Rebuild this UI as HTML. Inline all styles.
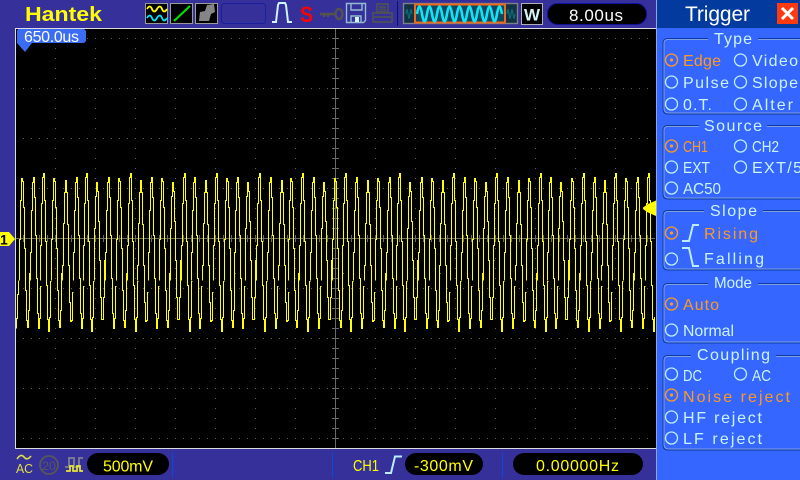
<!DOCTYPE html>
<html><head><meta charset="utf-8"><style>
html,body{margin:0;padding:0;background:#36309a;width:800px;height:480px;overflow:hidden}
svg{display:block;font-family:"Liberation Sans",sans-serif}
.c{shape-rendering:crispEdges}
.t{font-size:16px;fill:#ccf4ff}
.o{font-size:16px;fill:#ff9a1e}
.r{fill:none;stroke:#bdeeff;stroke-width:1.3}
.ro{fill:none;stroke:#ff9a1e;stroke-width:1.3}
.y{font-size:16px;fill:#ffff00}
</style></head><body>
<svg width="800" height="480" viewBox="0 0 800 480" xmlns="http://www.w3.org/2000/svg">
<defs>
<pattern id="rows" x="15" y="38" width="8" height="50" patternUnits="userSpaceOnUse"><rect class="c" x="0" y="0" width="1" height="1" fill="#5e5e5e"/></pattern>
<pattern id="cols" x="15" y="38" width="40" height="10" patternUnits="userSpaceOnUse"><rect class="c" x="0" y="0" width="1" height="1" fill="#5e5e5e"/></pattern>
<clipPath id="frame"><rect x="16" y="29" width="639" height="419"/></clipPath>
<path id="a" d="M0 28V0H1V-42H2V-70H3V-75H4V-55H5V-17H6V26H7V61H8V76H9V66H10V34H11"/>
<path id="b" d="M0 28V-13H1V-52H2V-74H3V-71H4V-45H5V-4H6V38H7V68H8V75H9V58H10V21H11"/>
<path id="d" d="M0 28V13H1V-29H2V-60H3V-72H4V-60H5V-28H6V13H7V50H8V69H9V68H10V40H11"/>
<path id="e" d="M0 28V-7H1V-49H2V-75H3V-79H4V-52H5V-11H6V33H7V67H8V79H9V65H10V29H11"/>
<path id="f" d="M0 28V-24H1V-56H2V-70H3V-61H4V-31H5V8H6V45H7V67H8V67H9V45H10V8H11"/>
</defs>
<rect width="800" height="480" fill="#36309a"/>
<!-- scope -->
<rect x="15" y="28" width="641" height="421" fill="#000"/>
<rect x="15" y="38" width="640" height="401" fill="url(#rows)"/>
<rect x="16" y="38" width="639" height="401" fill="url(#cols)"/>
<path class="c" d="M16 238.500H655M335.500 29V448" stroke="#6a6a6a" fill="none"/>
<path class="c" d="M15 238.500H655" stroke="#6a6a6a" stroke-width="7" stroke-dasharray="1 7" fill="none"/>
<path class="c" d="M335.500 38V439" stroke="#6a6a6a" stroke-width="7" stroke-dasharray="1 9" fill="none"/>
<path class="c" d="M15.500 28V449M15 28.500H656M15 448.500H656" stroke="#dcdcdc" fill="none"/>
<g clip-path="url(#frame)"><g class="c" transform="translate(0.5,252.5)" fill="none" stroke="#ffff00" stroke-width="1">
<path d="M16 76V66H17V42H18V28"/>
<use href="#b" x="19"/><use href="#a" x="30"/><use href="#e" x="40"/><use href="#b" x="51"/><use href="#d" x="62"/><use href="#a" x="73"/><use href="#e" x="83"/><use href="#f" x="94"/><use href="#a" x="105"/><use href="#b" x="116"/>
<use href="#e" x="127"/><use href="#d" x="137"/><use href="#a" x="148"/><use href="#b" x="159"/><use href="#f" x="170"/><use href="#e" x="181"/><use href="#a" x="191"/><use href="#d" x="202"/><use href="#e" x="213"/><use href="#b" x="224"/>
<use href="#a" x="234"/><use href="#f" x="245"/><use href="#e" x="256"/><use href="#a" x="267"/><use href="#d" x="278"/><use href="#b" x="288"/><use href="#e" x="299"/><use href="#a" x="310"/><use href="#f" x="321"/><use href="#b" x="332"/>
<use href="#e" x="342"/><use href="#a" x="353"/><use href="#d" x="364"/><use href="#b" x="375"/><use href="#a" x="386"/><use href="#e" x="396"/><use href="#f" x="407"/><use href="#a" x="418"/><use href="#b" x="429"/><use href="#d" x="439"/>
<use href="#e" x="450"/><use href="#a" x="461"/><use href="#b" x="472"/><use href="#f" x="483"/><use href="#e" x="493"/><use href="#a" x="504"/><use href="#d" x="515"/><use href="#b" x="526"/><use href="#e" x="537"/><use href="#a" x="547"/>
<use href="#f" x="558"/><use href="#b" x="569"/><use href="#e" x="580"/><use href="#a" x="591"/><use href="#d" x="601"/><use href="#e" x="612"/><use href="#b" x="623"/><use href="#a" x="634"/><use href="#e" x="645"/>
</g></g>
<!-- top bar -->
<text x="25" y="21" font-size="20" font-weight="700" fill="#ffff00" textLength="77" lengthAdjust="spacingAndGlyphs">Hantek</text>
<g class="c" fill="#000" stroke="#9a9a9a"><rect x="145.500" y="3.500" width="22" height="20"/><rect x="170.500" y="3.500" width="22" height="20"/><rect x="195.500" y="3.500" width="22" height="20"/></g>
<path d="M147 9q3-5 5 0t5 0 5 0 5 0" fill="none" stroke="#ffff00" stroke-width="1.800"/>
<path d="M147 18q3-5 5 0t5 0 5 0 5 0" fill="none" stroke="#00e6ff" stroke-width="1.800"/>
<path d="M174 21L190 6" stroke="#00e000" stroke-width="2.200"/>
<path d="M199 21l1-9 5-1 2-6 7-1 1 8-4 2-2 7z" fill="#858585"/>
<rect x="221.500" y="3.500" width="44" height="20" rx="3" fill="none" stroke="#1a1f9c" stroke-width="1"/>
<path d="M272 22h4l2-17 1-2h6l1 2 2 17h4" fill="none" stroke="#cdf4ff" stroke-width="2"/>
<text x="300" y="22" font-size="22" font-weight="700" fill="#ff0000" textLength="13" lengthAdjust="spacingAndGlyphs">S</text>
<path d="M320 14h15M324 14v3M328 14v3" stroke="#55534f" stroke-width="2.400" fill="none"/>
<ellipse cx="339" cy="14" rx="3.500" ry="5" fill="none" stroke="#55534f" stroke-width="2.400"/>
<path d="M346.500 3.500h19v17l-2 2h-17zM351 4v6h11V4M351 23v-7h10v7" fill="none" stroke="#93bcd0" stroke-width="1.400"/>
<rect x="355" y="17" width="4" height="5" fill="#cdf4ff"/>
<path d="M377 4h11v8h-11zM373 13h19v9h-19zM379 7h7M379 9.500h7M374 17h17" fill="none" stroke="#4e5058" stroke-width="1.700"/>
<path class="c" d="M397.500 1V26" stroke="#0a0f70"/>
<rect x="403.500" y="3.500" width="114" height="20" fill="#123246" stroke="#7f7f86" stroke-width="1.400"/>
<path d="M406 14q1-9 2 0t2 0 2 0M507 14q1-9 2 0t2 0 2 0 2 0" fill="none" stroke="#0c7a80" stroke-width="1"/>
<rect x="415" y="4.500" width="90" height="18" fill="#0d4860" stroke="#f0681a" stroke-width="2"/>
<path d="M417 14q2.500-15 5 0t5 0 5 0 5 0 5 0 5 0 5 0 5 0 5 0 5 0 5 0 5 0 5 0 5 0 5 0 5 0 5 0" fill="none" stroke="#12e4f4" stroke-width="2.600"/>
<rect x="521.500" y="3.500" width="21" height="21" fill="#000" stroke="#b0b0b0"/>
<text x="524" y="20.500" font-size="17" font-weight="700" fill="#d4f4f4" textLength="16" lengthAdjust="spacingAndGlyphs">W</text>
<rect x="547.500" y="3.500" width="99" height="21" rx="10" fill="#000" stroke="#10109a"/>
<text x="569" y="21" font-size="17" fill="#fff" textLength="54">8.00us</text>
<!-- time tag -->
<path d="M18 29H84l2 2V41l-2 2H32l-7 9-8-9V31z" fill="#3a6cf4"/>
<text x="24" y="42" font-size="16" fill="#fff" textLength="55">650.0us</text>
<!-- ch marker / trigger -->
<path d="M0 232H9l6 7-6 7H0z" fill="#ffff00"/>
<text x="0" y="244.500" font-size="14" font-weight="700" fill="#000">1</text>
<path d="M656 200.500V216L648 212.500 643 209V207.500L648 204z" fill="#ffff00"/>
<!-- bottom -->
<path d="M17 459q4-6 7-2t7-1" fill="none" stroke="#dede44" stroke-width="1.600"/>
<text x="16" y="473" font-size="13" fill="#dede44" textLength="17" lengthAdjust="spacingAndGlyphs">AC</text>
<circle cx="49" cy="465" r="9" fill="none" stroke="#55575a" stroke-width="1.800"/>
<text x="42" y="470" font-size="12" fill="#55575a" textLength="14" lengthAdjust="spacingAndGlyphs">20</text>
<path d="M65 467h4v-9h5v9h5v-9h4" fill="none" stroke="#77778e" stroke-width="2"/>
<path d="M66 471h4v-5h3v5h4v-5h3v5h3" fill="none" stroke="#e8e830" stroke-width="1.700"/>
<rect x="87" y="453" width="82" height="22" rx="11" fill="#000"/>
<text class="y" x="103" y="471.500" textLength="50">500mV</text>
<path class="c" d="M172.500 452V478M332.500 452V478M502.500 452V478" stroke="#0e48d8"/>
<text class="y" x="353" y="471" textLength="26" lengthAdjust="spacingAndGlyphs">CH1</text>
<path d="M385 473h6l4-16.500h7" fill="none" stroke="#bcecff" stroke-width="2"/>
<rect x="405" y="453" width="78" height="22" rx="11" fill="#000"/>
<text class="y" x="414" y="471" textLength="59">-300mV</text>
<rect x="513" y="453" width="130" height="22" rx="11" fill="#000"/>
<text class="y" x="536" y="471" textLength="83">0.00000Hz</text>
<!-- panel -->
<rect x="656" y="0" width="144" height="480" fill="#3566ff"/>
<rect x="656" y="0" width="144" height="28" fill="#033a9e"/>
<path class="c" d="M656.500 0V480" stroke="#8fa4e8"/>
<text x="685" y="21" font-size="21" fill="#fff" textLength="65">Trigger</text>
<rect x="777" y="3" width="21" height="21" fill="#ff3a10"/>
<path d="M782 8L793 19M793 8L782 19" stroke="#fff" stroke-width="3"/>
<g fill="none" stroke-width="1">
<g stroke="#0a3aa8">
<path d="M708 38.500H668q-5 0-5 5V109q0 5 5 5H800M758 38.500H800"/>
<path d="M699 125.500H668q-5 0-5 5V194q0 5 5 5H800M767 125.500H800"/>
<path d="M704 210.500H668q-5 0-5 5V265q0 5 5 5H800M763 210.500H800"/>
<path d="M708 283.500H668q-5 0-5 5V338q0 5 5 5H800M758 283.500H800"/>
<path d="M691 355.500H668q-5 0-5 5V445q0 5 5 5H800M776 355.500H800"/>
</g>
<g stroke="#7f9fe0">
<path d="M708 39.500H668q-4 0-4 4V108q0 5 5 5H800M758 39.500H800"/>
<path d="M699 126.500H668q-4 0-4 4V193q0 5 5 5H800M767 126.500H800"/>
<path d="M704 211.500H668q-4 0-4 4V264q0 5 5 5H800M763 211.500H800"/>
<path d="M708 284.500H668q-4 0-4 4V337q0 5 5 5H800M758 284.500H800"/>
<path d="M691 356.500H668q-4 0-4 4V444q0 5 5 5H800M776 356.500H800"/>
</g></g>
<g class="t">
<text x="714" y="44" textLength="38">Type</text>
<text x="704" y="131" textLength="58">Source</text>
<text x="710" y="216" textLength="47">Slope</text>
<text x="714" y="288" textLength="38" lengthAdjust="spacingAndGlyphs">Mode</text>
<text x="697" y="360" textLength="73">Coupling</text>
<text x="752" y="66" textLength="46">Video</text>
<text x="683" y="88" textLength="46">Pulse</text>
<text x="752" y="88" textLength="46">Slope</text>
<text x="683" y="110" textLength="29">0.T.</text>
<text x="752" y="110" textLength="41">Alter</text>
<text x="752" y="152" textLength="27" lengthAdjust="spacingAndGlyphs">CH2</text>
<text x="683" y="173" textLength="27" lengthAdjust="spacingAndGlyphs">EXT</text>
<text x="752" y="173" textLength="50">EXT/5</text>
<text x="683" y="194" textLength="38" lengthAdjust="spacingAndGlyphs">AC50</text>
<text x="704" y="264" textLength="60">Falling</text>
<text x="683" y="336" textLength="51" lengthAdjust="spacingAndGlyphs">Normal</text>
<text x="683" y="381" textLength="19" lengthAdjust="spacingAndGlyphs">DC</text>
<text x="752" y="381" textLength="19" lengthAdjust="spacingAndGlyphs">AC</text>
<text x="683" y="423" textLength="79">HF reject</text>
<text x="683" y="444" textLength="79">LF reject</text>
</g>
<g class="o">
<text x="683" y="66" textLength="38">Edge</text>
<text x="683" y="152" textLength="25" lengthAdjust="spacingAndGlyphs">CH1</text>
<text x="704" y="239" textLength="54">Rising</text>
<text x="683" y="310" textLength="36">Auto</text>
<text x="683" y="402" textLength="107">Noise reject</text>
</g>
<g class="r">
<circle cx="671.500" cy="82" r="6"/><circle cx="740.500" cy="60" r="6"/><circle cx="740.500" cy="82" r="6"/><circle cx="671.500" cy="104" r="6"/><circle cx="740.500" cy="104" r="6"/>
<circle cx="740.500" cy="146" r="6"/><circle cx="671.500" cy="167" r="6"/><circle cx="740.500" cy="167" r="6"/><circle cx="671.500" cy="188" r="6"/>
<circle cx="671.500" cy="259" r="6"/><circle cx="671.500" cy="330" r="6"/>
<circle cx="671.500" cy="374" r="6"/><circle cx="740.500" cy="374" r="6"/><circle cx="671.500" cy="417" r="6"/><circle cx="671.500" cy="438" r="6"/>
</g>
<g class="ro">
<circle cx="671.500" cy="60" r="6"/><circle cx="671.500" cy="146" r="6"/><circle cx="671.500" cy="233" r="6"/><circle cx="671.500" cy="304" r="6"/><circle cx="671.500" cy="395" r="6"/>
</g>
<g fill="#ff9a1e"><circle cx="671.500" cy="60" r="1.600"/><circle cx="671.500" cy="146" r="1.600"/><circle cx="671.500" cy="233" r="1.600"/><circle cx="671.500" cy="304" r="1.600"/><circle cx="671.500" cy="395" r="1.600"/></g>
<path d="M682 241h7l4-16h6M682 248h7l4 18h6" fill="none" stroke="#bcecff" stroke-width="2"/>
</svg>
</body></html>
